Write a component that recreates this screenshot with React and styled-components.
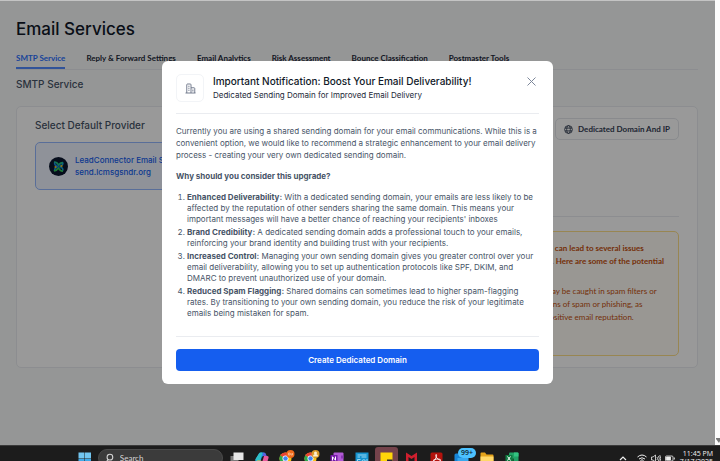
import React from 'react'
import styled, { createGlobalStyle } from 'styled-components'

const GlobalStyle = createGlobalStyle`
  * {
    box-sizing: border-box;
  }
  body {
    margin: 0;
    font-family: Inter, 'Liberation Sans', sans-serif;
    color: #344054;
  }
  h1, h2, h3, p, ol {
    margin: 0;
    font-weight: 500;
  }
  a {
    text-decoration: none;
  }
  button {
    font-family: inherit;
    cursor: pointer;
  }
`

const Desktop = styled.div`
  display: flex;
  flex-direction: column;
  height: 100vh;
  overflow: hidden;
`

const BrowserWindow = styled.div`
  position: relative;
  display: flex;
  flex: 1;
  min-height: 0;
`

const Page = styled.main`
  flex: 1;
  min-width: 0;
  overflow: hidden;
  background: #f9fafb;
  padding: 17px 17px 0 16px;
`

const ScrollTrack = styled.div`
  display: flex;
  align-items: flex-end;
  width: 5px;
  background: #fcfcfc;
`

const PageTitle = styled.h1`
  font-size: 17px;
  line-height: 24px;
  color: #101828;
`

const Tabs = styled.nav`
  display: flex;
  gap: 21px;
  margin-top: 11px;
  border-bottom: 1px solid #eaecf0;
`

const Tab = styled.a`
  padding-bottom: 3px;
  border-bottom: 2px solid ${({ $active }) => ($active ? '#528bff' : 'transparent')};
  font: 700 8px/12px Lato, 'Open Sans', sans-serif;
  color: ${({ $active }) => ($active ? '#2970ff' : '#1d2939')};
  white-space: nowrap;
`

const SectionTitle = styled.h2`
  margin-top: 6px;
  font-size: 10px;
  line-height: 16px;
  color: #475467;
`

const Card = styled.section`
  display: grid;
  grid-template-columns: 6fr 5fr;
  gap: 16px;
  min-height: 262px;
  margin-top: 14px;
  padding: 10px 18px;
  border: 1px solid #eaecf0;
  border-radius: 5px;
  background: #fff;
`

const CardTitle = styled.h3`
  font-size: 10px;
  line-height: 16px;
  color: #475467;
`

const Provider = styled.div`
  display: flex;
  align-items: center;
  gap: 7px;
  height: 48px;
  margin-top: 9px;
  padding: 0 13px;
  border: 1px solid #94b8ff;
  border-radius: 5px;
  background: #eff4ff;
`

const ProviderText = styled.div`
  font-size: 8px;
  line-height: 12px;
  font-weight: 500;
  color: #155eef;
`

const Side = styled.div`
  display: flex;
  flex-direction: column;
  padding-top: 1px;
`

const DomainButton = styled.button`
  display: flex;
  align-items: center;
  align-self: flex-end;
  gap: 5px;
  height: 22px;
  padding: 0 8px;
  border: 1px solid #e4e7ec;
  border-radius: 5px;
  background: #fff;
  font: 700 8px/12px Lato, 'Open Sans', sans-serif;
  color: #344054;
`

const Rule = styled.hr`
  width: 100%;
  margin: ${({ $gap }) => $gap};
  border: 0;
  border-top: 1px solid #eaecf0;
`

const Warning = styled.div`
  height: 125px;
  padding: 10px 14px 10px 19px;
  border: 1px solid #fedf89;
  border-radius: 5px;
  background: #fffcf5;
  font: 400 8px/13px Lato, 'Open Sans', sans-serif;
  color: #c4500d;
  white-space: nowrap;
`

const WarningText = styled.p`
  font-weight: ${({ $strong }) => ($strong ? 700 : 400)};
  margin-bottom: 17px;
`

const Overlay = styled.div`
  position: absolute;
  inset: 0 5px 0 0;
  display: flex;
  align-items: center;
  justify-content: center;
  background: rgba(0, 0, 0, 0.4);
  box-shadow: inset 0 1px 0 #c4c4c4;
`

const Modal = styled.div`
  width: 391px;
  max-width: 94%;
  padding: 13px 14px;
  border-radius: 6px;
  background: #fff;
`

const ModalHeader = styled.header`
  display: flex;
  align-items: center;
  gap: 9px;
`

const IconBox = styled.div`
  display: flex;
  align-items: center;
  justify-content: center;
  width: 28px;
  height: 28px;
  border: 1px solid #f2f4f7;
  border-radius: 5px;
`

const Heading = styled.div`
  flex: 1;
`

const ModalTitle = styled.h2`
  font-size: 10px;
  line-height: 14px;
  color: #101828;
`

const ModalSubtitle = styled.p`
  font-size: 8px;
  line-height: 14px;
  font-weight: 400;
  color: #1d2939;
`

const CloseButton = styled.button`
  display: flex;
  align-self: flex-start;
  padding: 3px;
  border: 0;
  background: none;
  color: #7d879a;
`

const ModalBody = styled.div`
  font-size: 8px;
  line-height: 11px;
  color: #475467;

  b {
    font-weight: 700;
  }
`

const Intro = styled.p`
  line-height: 12px;
  font-weight: 400;
`

const Question = styled.h3`
  margin: 10px 0;
  font-size: 8px;
  line-height: 11px;
  font-weight: 700;
`

const Reasons = styled.ol`
  display: flex;
  flex-direction: column;
  gap: 2px;
  padding-left: 11px;
  font-weight: 400;
`

const PrimaryButton = styled.button`
  display: block;
  width: 100%;
  height: 22px;
  border: 0;
  border-radius: 4px;
  background: #155eef;
  font-size: 8px;
  font-weight: 600;
  color: #fff;
`

const Taskbar = styled.footer`
  display: flex;
  flex: 0 0 16px;
  align-items: flex-start;
  overflow: hidden;
  padding-left: 72px;
  border-top: 1px solid #3a3a3a;
  background: #1c1c1c;
`

const TaskItem = styled.div`
  position: relative;
  display: flex;
  flex: 0 0 25px;
  justify-content: center;
  padding-top: ${({ $tall }) => ($tall ? '4px' : '6px')};
`

const ActiveTile = styled.div`
  display: flex;
  justify-content: center;
  width: 23px;
  height: 24px;
  margin-top: -5px;
  padding-top: 5px;
  border-radius: 3px;
  background: #74434b;
`

const Badge = styled.span`
  position: absolute;
  top: 2px;
  right: -2px;
  padding: 0 3px;
  border-radius: 5px;
  background: #4cc2ff;
  font: 600 7px/10px 'Open Sans', sans-serif;
  color: #10242f;
`

const SearchBox = styled.label`
  display: flex;
  flex: 0 1 125px;
  align-items: center;
  gap: 6px;
  height: 18px;
  margin: 3px 1px 0;
  padding: 0 7px;
  border: 1px solid #4a4a4a;
  border-radius: 9px;
  background: #3b3b3b;

  input {
    width: 100%;
    min-width: 0;
    padding: 0;
    border: 0;
    background: none;
    outline: none;
    font: 400 8px/12px Lato, sans-serif;
  }
  input::placeholder {
    color: #d4d4d4;
    opacity: 1;
  }
`

const Tray = styled.div`
  display: flex;
  align-items: flex-start;
  gap: 4px;
  margin-left: auto;
  padding: 8px 7px 0 0;
`

const Clock = styled.time`
  margin: -4px 0 0 1px;
  font: 400 7px/8px 'Open Sans', sans-serif;
  text-align: right;
  color: #f2f2f2;
`

const tabs = [
  'SMTP Service',
  'Reply & Forward Settings',
  'Email Analytics',
  'Risk Assessment',
  'Bounce Classification',
  'Postmaster Tools',
]

const reasons = [
  {
    title: 'Enhanced Deliverability:',
    lines: [
      'With a dedicated sending domain, your emails are less likely to be',
      'affected by the reputation of other senders sharing the same domain. This means your',
      "important messages will have a better chance of reaching your recipients' inboxes",
    ],
  },
  {
    title: 'Brand Credibility:',
    lines: [
      'A dedicated sending domain adds a professional touch to your emails,',
      'reinforcing your brand identity and building trust with your recipients.',
    ],
  },
  {
    title: 'Increased Control:',
    lines: [
      'Managing your own sending domain gives you greater control over your',
      'email deliverability, allowing you to set up authentication protocols like SPF, DKIM, and',
      'DMARC to prevent unauthorized use of your domain.',
    ],
  },
  {
    title: 'Reduced Spam Flagging:',
    lines: [
      'Shared domains can sometimes lead to higher spam-flagging',
      'rates. By transitioning to your own sending domain, you reduce the risk of your legitimate',
      'emails being mistaken for spam.',
    ],
  },
]

function Lines({ items }) {
  return items.map((line, i) => (
    <React.Fragment key={line}>
      {i > 0 && <br />}
      {line}
    </React.Fragment>
  ))
}

function ProviderLogo() {
  return (
    <svg width="19" height="19" viewBox="0 0 38 38" fill="none">
      <circle cx="19" cy="19" r="19" fill="#0b1730" />
      <path d="M10 10c5 0 8 3 9 7 2-4 5-6 9-6" stroke="#22c58b" strokeWidth="3.5" />
      <path d="M11 28c0-5 3-8 7-9-5-1-7-4-7-8" stroke="#1a8fe8" strokeWidth="3" />
      <path d="M28 28c-5 0-8-3-9-7-2 4-5 6-9 7" stroke="#35c759" strokeWidth="3.5" />
      <path d="M28 11c0 4-3 7-7 8 4 1 7 4 7 8" stroke="#19a7d8" strokeWidth="3" />
      <path d="M15 15l8 8M23 15l-8 8" stroke="#0f6cbd" strokeWidth="2" />
      <circle cx="13" cy="20" r="2.2" fill="#f5c518" />
      <circle cx="25" cy="18" r="2.2" fill="#f5c518" />
    </svg>
  )
}

function GlobeIcon() {
  return (
    <svg width="9" height="9" viewBox="0 0 18 18" fill="none" stroke="currentColor" strokeWidth="1.7">
      <circle cx="9" cy="9" r="7.8" />
      <ellipse cx="9" cy="9" rx="3.7" ry="7.8" />
      <path d="M2 6.2h14M2 11.8h14" />
    </svg>
  )
}

function BuildingIcon() {
  return (
    <svg width="11" height="11" viewBox="0 0 22 22" fill="none" stroke="#667085" strokeWidth="1.8">
      <path d="M3.5 20V3.5A1.5 1.5 0 0 1 5 2h5.500A1.500 1.500 0 0 1 12 3.500V20M12 9.500h6a1.500 1.500 0 0 1 1.500 1.500v9M1 20h20" />
      <path d="M6.500 6.500h2.500M6.500 10.500h2.500M6.500 14.500h2.500M15.800 13v4" />
    </svg>
  )
}

function ChromeIcon({ badge, children }) {
  return (
    <svg width="17" height="16" viewBox="0 0 34 32">
      <circle cx="15" cy="17" r="12" fill="#fbc116" />
      <path d="M15 17L4.600 11A12 12 0 0 1 25.400 11z" fill="#e94235" />
      <path d="M15 17L4.600 11A12 12 0 0 0 15 29l5-9z" fill="#2da94f" />
      <circle cx="15" cy="17" r="6" fill="#fff" />
      <circle cx="15" cy="17" r="4.500" fill="#4285f4" />
      <circle cx="25" cy="8" r="8" fill={badge} />
      {children}
    </svg>
  )
}

function OpenApps() {
  return (
    <>
      <TaskItem>
        <svg width="14" height="13" viewBox="0 0 28 26">
          <path d="M1 8h16v14H1z" fill="#7a7a7a" />
          <path d="M7 1h20v15H7z" fill="#e6e6e6" />
        </svg>
      </TaskItem>
      <TaskItem>
        <svg width="14" height="13" viewBox="0 0 28 26">
          <path d="M8 3q1-2 4-2h6q3 0 4 4l1 3h-6q-3 0-4 4l-2 7H3q-3 0-2-4z" fill="#2490e8" />
          <path d="M8 3q1-2 4-2h3l-5 17H3q-3 0-2-4z" fill="#2fc0c8" />
          <path d="M18 8h6q4 0 3 4l-3 10q-1 3-4 3h-7z" fill="#e8589b" />
          <path d="M17 1q4 0 5 5l1 2h-7z" fill="#6557d8" />
          <path d="M4 17h8l5 8H10q-3 0-4-4z" fill="#f2b632" />
        </svg>
      </TaskItem>
      <TaskItem $tall>
        <ChromeIcon badge="#f26b1d">
          <path d="M21 6h3v4h-3zM26 6v4h3V6" stroke="#ffd6b8" fill="none" strokeWidth="1.200" />
        </ChromeIcon>
      </TaskItem>
      <TaskItem $tall>
        <ChromeIcon badge="#d99a2b">
          <circle cx="25" cy="6" r="3" fill="#fff0cf" />
          <path d="M20 13a5 5 0 0 1 10 0z" fill="#fff0cf" />
        </ChromeIcon>
      </TaskItem>
      <TaskItem>
        <svg width="14" height="13" viewBox="0 0 28 26">
          <rect x="7" y="1" width="20" height="25" rx="2" fill="#b15bd6" />
          <path d="M22 7h5v6h-5z" fill="#8a37b5" />
          <rect x="1" y="6" width="14" height="14" rx="1" fill="#7719aa" />
          <path d="M5 17V9.500l6 7V9" stroke="#fff" strokeWidth="2" fill="none" />
        </svg>
      </TaskItem>
      <TaskItem>
        <svg width="14" height="14" viewBox="0 0 28 28" fill="none">
          <path d="M1 1h26v26H1z" fill="#1593cf" />
          <path d="M5 6h18M5 10h5M13 10h10M5 20v-5h6M14 19a3.500 3.500 0 1 1 7 0M24 14v10H5" stroke="#a9e1f7" strokeWidth="1.800" />
        </svg>
      </TaskItem>
      <TaskItem>
        <ActiveTile>
          <svg width="13" height="14" viewBox="0 0 26 28">
            <path d="M1 1h24v26H1z" fill="#ffd60a" />
            <path d="M14 15h11v12H14z" fill="#2b2b2b" />
          </svg>
        </ActiveTile>
      </TaskItem>
      <TaskItem>
        <svg width="13" height="13" viewBox="0 0 26 26">
          <path d="M2 1l11 7 11-7v20l-5 3V10l-6 4-6-4v14l-5-3z" fill="#cf1f2e" />
        </svg>
      </TaskItem>
      <TaskItem>
        <svg width="13" height="13" viewBox="0 0 26 26">
          <rect x="1" y="1" width="24" height="25" rx="3" fill="#b3120c" />
          <path d="M12 5c3 0 0 10-7 15M12 5c-2 3 3 11 10 12M6 17c4-3 10-4 15-2" stroke="#fff" strokeWidth="1.800" fill="none" />
        </svg>
      </TaskItem>
      <TaskItem>
        <svg width="15" height="13" viewBox="0 0 30 26">
          <rect x="1" y="3" width="20" height="23" rx="3" fill="#1685d8" />
          <path d="M7 12h22v14H7z" fill="#37a8ee" />
        </svg>
        <Badge>99+</Badge>
      </TaskItem>
      <TaskItem>
        <svg width="14" height="13" viewBox="0 0 28 26">
          <path d="M1 3q0-2 2-2h7l3 4h12q2 0 2 2v19H1z" fill="#e3a21a" />
          <path d="M1 9h26v17H1z" fill="#ffd868" />
          <path d="M8 18h12v8H8z" fill="#3a8fd9" />
        </svg>
      </TaskItem>
      <TaskItem>
        <svg width="14" height="13" viewBox="0 0 28 26">
          <rect x="8" y="1" width="19" height="25" rx="2" fill="#21a366" />
          <path d="M18 1h7q2 0 2 2v6h-9z" fill="#33c481" />
          <path d="M8 13h10v13H8z" fill="#185c37" />
          <rect x="1" y="6" width="14" height="14" rx="1" fill="#107c41" />
          <path d="M5 9l6 8M11 9l-6 8" stroke="#fff" strokeWidth="2" />
        </svg>
      </TaskItem>
    </>
  )
}

export default function App() {
  return (
    <Desktop>
      <GlobalStyle />
      <BrowserWindow>
        <Page>
          <PageTitle>Email Services</PageTitle>
          <Tabs>
            {tabs.map((tab, i) => (
              <Tab key={tab} href="#" $active={i === 0}>
                {tab}
              </Tab>
            ))}
          </Tabs>
          <SectionTitle>SMTP Service</SectionTitle>
          <Card>
            <div>
              <CardTitle>Select Default Provider</CardTitle>
              <Provider>
                <ProviderLogo />
                <ProviderText>
                  LeadConnector Email System
                  <br />
                  send.lcmsgsndr.org
                </ProviderText>
              </Provider>
            </div>
            <Side>
              <DomainButton>
                <GlobeIcon />
                Dedicated Domain And IP
              </DomainButton>
              <Rule $gap="76px 0 14px" />
              <Warning>
                <WarningText $strong>
                  <Lines
                    items={[
                      'Sending through a shared email domain can lead to several issues',
                      'that affect how your messages perform. Here are some of the potential',
                    ]}
                  />
                </WarningText>
                <WarningText>
                  <Lines
                    items={[
                      'Spam filters: mail on a shared domain may be caught in spam filters or',
                      'blocked by the provider that looks at signs of spam or phishing, as',
                      'it is shared with senders, without any positive email reputation.',
                    ]}
                  />
                </WarningText>
              </Warning>
            </Side>
          </Card>
        </Page>
        <ScrollTrack>
          <svg width="5" height="8" viewBox="0 0 5 8">
            <path d="M1 1h4v3L4 6 1 2z" fill="#777" />
          </svg>
        </ScrollTrack>
        <Overlay>
          <Modal role="dialog" aria-labelledby="modal-title">
            <ModalHeader>
              <IconBox>
                <BuildingIcon />
              </IconBox>
              <Heading>
                <ModalTitle id="modal-title">Important Notification: Boost Your Email Deliverability!</ModalTitle>
                <ModalSubtitle>Dedicated Sending Domain for Improved Email Delivery</ModalSubtitle>
              </Heading>
              <CloseButton aria-label="Close">
                <svg width="9" height="9" viewBox="0 0 9 9" stroke="currentColor">
                  <path d="M.5 .5l8 8M8.500 .5l-8 8" />
                </svg>
              </CloseButton>
            </ModalHeader>
            <Rule $gap="11px 0" />
            <ModalBody>
              <Intro>
                <Lines
                  items={[
                    'Currently you are using a shared sending domain for your email communications. While this is a',
                    'convenient option, we would like to recommend a strategic enhancement to your email delivery',
                    'process - creating your very own dedicated sending domain.',
                  ]}
                />
              </Intro>
              <Question>Why should you consider this upgrade?</Question>
              <Reasons>
                {reasons.map(({ title, lines }) => (
                  <li key={title}>
                    <b>{title}</b> <Lines items={lines} />
                  </li>
                ))}
              </Reasons>
            </ModalBody>
            <Rule $gap="17px 0 12px" />
            <PrimaryButton>Create Dedicated Domain</PrimaryButton>
          </Modal>
        </Overlay>
      </BrowserWindow>
      <Taskbar>
        <TaskItem>
          <svg width="13" height="13" viewBox="0 0 26 26" fill="#72c5ef">
            <path d="M1 1h12v12H1zM14 1h12v12H14z" />
            <path d="M1 14h12v12H1zM14 14h12v12H14z" fill="#3fa9e8" />
          </svg>
        </TaskItem>
        <SearchBox>
          <svg width="9" height="10" viewBox="0 0 18 20" fill="none" stroke="#d4d4d4" strokeWidth="2.500">
            <circle cx="9" cy="8" r="6.500" />
            <path d="M5 13l-3.500 5" />
          </svg>
          <input type="text" placeholder="Search" aria-label="Search" />
        </SearchBox>
        <OpenApps />
        <Tray>
          <svg width="15" height="9" viewBox="0 0 15 9" fill="none" stroke="#eee" strokeWidth="1.200">
            <path d="M2 6l3-3 3 3" />
          </svg>
          <svg width="10" height="9" viewBox="0 0 20 18" fill="none" stroke="#eee" strokeWidth="2">
            <path d="M1 6q9-8 18 0M4 10q6-5 12 0M7 13q3-3 6 0" />
          </svg>
          <svg width="10" height="9" viewBox="0 0 20 18" fill="none" stroke="#eee" strokeWidth="1.600">
            <path d="M1 6h3l5-4v14l-5-4H1zM12 6q2 3 0 6M15 4q3 5 0 10M17.500 2q4 7 0 14" />
          </svg>
          <svg width="10" height="9" viewBox="0 0 20 18" fill="none" stroke="#eee" strokeWidth="1.600">
            <rect x="1" y="4" width="15" height="10" rx="2" />
            <path d="M3 6h8v6H3z" fill="#eee" />
            <path d="M18.500 7v4" strokeWidth="2" />
          </svg>
          <Clock>
            11:45 PM
            <br />
            7/17/2025
          </Clock>
        </Tray>
      </Taskbar>
    </Desktop>
  )
}
